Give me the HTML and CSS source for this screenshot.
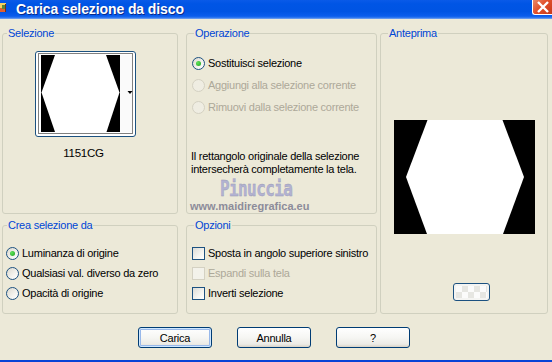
FILE: index.html
```html
<!DOCTYPE html>
<html>
<head>
    <link rel="stylesheet" href="styles.css">
</head>
<body>
    <div class="window">
        <div class="titlebar">
            <svg class="app-icon" width="8" height="14" viewBox="0 0 8 14">
                <rect x="0" y="2" width="6" height="5" fill="#f4d060"/>
                <rect x="0" y="7" width="6" height="4" fill="#e06030"/>
                <rect x="2" y="4" width="3" height="4" fill="#5a8a3a"/>
                <rect x="5" y="3" width="1" height="8" fill="#703018"/>
            </svg>
            <span class="title">Carica selezione da disco</span>
            <div class="close-btn">
                <svg width="20" height="16" viewBox="0 0 20 16">
                    <path d="M5 2 L15 12 M15 2 L5 12" stroke="#fff" stroke-width="2.4"/>
                </svg>
            </div>
        </div>

        <div class="dialog-body">
            <div class="groups">
                <!-- Selezione -->
                <fieldset class="groupbox col-left row-top">
                    <legend class="legend-left">Selezione</legend>
                    <div class="gb-body sel-body">
                        <div class="thumb">
                            <svg width="99" height="84" viewBox="0 0 99 84">
                                <rect x="5" y="3" width="79" height="77" fill="#000"/>
                                <polygon points="19,3 70,3 83.5,40.5 70.5,80 19,80 5.5,40.5" fill="#fff"/>
                                <rect x="84" y="3" width="12" height="77" fill="#fafafa"/>
                                <polygon points="91.5,39 96.5,39 94,42" fill="#000"/>
                                <rect x="2.5" y="1.5" width="94" height="80" fill="none" stroke="#000" stroke-dasharray="1 1"/>
                            </svg>
                        </div>
                        <div class="thumb-label">1151CG</div>
                    </div>
                </fieldset>

                <!-- Operazione -->
                <fieldset class="groupbox col-mid row-top">
                    <legend>Operazione</legend>
                    <div class="gb-body op-body">
                        <div class="opt-row tall"><span class="radio checked"></span>Sostituisci selezione</div>
                        <div class="opt-row tall disabled"><span class="radio"></span>Aggiungi alla selezione corrente</div>
                        <div class="opt-row tall disabled"><span class="radio"></span>Rimuovi dalla selezione corrente</div>
                        <p class="op-note">Il rettangolo originale della selezione<br>intersecherà completamente la tela.</p>
                    </div>
                </fieldset>

                <!-- Anteprima -->
                <fieldset class="groupbox col-right row-both">
                    <legend>Anteprima</legend>
                    <div class="gb-body preview-body">
                        <div class="preview">
                            <svg width="141" height="114" viewBox="0 0 141 114">
                                <rect width="141" height="114" fill="#000"/>
                                <polygon points="33.5,0 108.5,0 130,57 109,114 33,114 12,57" fill="#fff"/>
                            </svg>
                        </div>
                        <div class="swatch-btn"><div class="swatch"></div></div>
                    </div>
                </fieldset>

                <!-- Crea selezione da -->
                <fieldset class="groupbox col-left row-bottom">
                    <legend class="legend-left">Crea selezione da</legend>
                    <div class="gb-body crea-body">
                        <div class="opt-row"><span class="radio checked"></span>Luminanza di origine</div>
                        <div class="opt-row"><span class="radio"></span>Qualsiasi val. diverso da zero</div>
                        <div class="opt-row"><span class="radio"></span>Opacità di origine</div>
                    </div>
                </fieldset>

                <!-- Opzioni -->
                <fieldset class="groupbox col-mid row-bottom">
                    <legend>Opzioni</legend>
                    <div class="gb-body opz-body">
                        <div class="opt-row"><span class="check"></span>Sposta in angolo superiore sinistro</div>
                        <div class="opt-row disabled"><span class="check"></span>Espandi sulla tela</div>
                        <div class="opt-row"><span class="check"></span>Inverti selezione</div>
                    </div>
                </fieldset>
            </div>

            <div class="buttons">
                <button class="btn default">Carica</button>
                <button class="btn">Annulla</button>
                <button class="btn">?</button>
            </div>

            <div class="watermark">
                <div class="wm-name">Pinuccia</div>
                <div class="wm-site">www.maidiregrafica.eu</div>
            </div>
        </div>
    </div>
</body>
</html>
```

FILE: styles.css
```css
/* Finestra di dialogo stile XP */
body {
    margin: 0;
    background-color: #ece9d8;
    font-family: "Liberation Sans", Arial, sans-serif;
    font-size: 11px;
    letter-spacing: -0.25px;
    color: #000;
}

.window {
    width: 552px;
    height: 362px;
    box-sizing: border-box;
    border-bottom: 2px solid #0843d6;
    display: flex;
    flex-direction: column;
    overflow: hidden;
}

.titlebar {
    height: 19px;
    flex-shrink: 0;
    display: flex;
    align-items: flex-start;
    background: linear-gradient(#0a5ae8 0%, #0055e5 20%, #0054e3 60%, #0a5ded 85%, #3a7ff0 95%, #8fb2ec 100%);
}

.app-icon {
    margin-top: 1px;
}

.title {
    margin-left: 8px;
    margin-top: 1px;
    color: #fff;
    font-weight: bold;
    font-size: 14px;
    letter-spacing: -0.1px;
    line-height: 16px;
    text-shadow: 1px 1px 0 #0a2a8a;
}

.close-btn {
    margin-left: auto;
    width: 20px;
    height: 15px;
    box-sizing: border-box;
    border: 1px solid #fff;
    border-top: none;
    border-right: none;
    border-radius: 0 0 0 3px;
    background: linear-gradient(135deg, #ea8a6a 0%, #e1502b 45%, #c8391a 100%);
    line-height: 0;
}

.dialog-body {
    position: relative;
    flex: 1;
    padding: 8px 4px 0 2px;
}

.groups {
    display: grid;
    grid-template-columns: 176px 8px 191px 3px 168px;
    grid-template-rows: 187px 95px;
    row-gap: 5px;
}

.col-left { grid-column: 1; }
.col-mid { grid-column: 3; }
.col-right { grid-column: 5; }
.row-top { grid-row: 1; }
.row-bottom { grid-row: 2; }
.row-both { grid-row: 1 / 3; }

.groupbox {
    margin: 0;
    padding: 0;
    min-width: 0;
    border: 1px solid #d0d0bf;
    border-radius: 3px;
}

.groupbox legend {
    color: #0046d5;
    line-height: 13px;
    padding: 0 1px;
    margin-left: 7px;
}

.groupbox .legend-left {
    margin-left: 4px;
}

/* Selezione */
.sel-body {
    padding: 11px 0 0 32px;
}

.thumb {
    width: 101px;
    height: 86px;
    box-sizing: border-box;
    border: 1px solid #1c5180;
    border-radius: 3px;
    background-color: #fff;
    line-height: 0;
}

.thumb-label {
    width: 97px;
    margin-top: 10px;
    text-align: center;
    line-height: 13px;
    font-size: 11.5px;
}

/* Righe con radio e checkbox */
.opt-row {
    height: 20px;
    display: flex;
    align-items: center;
    white-space: nowrap;
}

.opt-row.tall {
    height: 22px;
}

.opt-row.disabled {
    color: #aca899;
}

.radio {
    width: 13px;
    height: 13px;
    box-sizing: border-box;
    border: 1px solid #1c5180;
    border-radius: 50%;
    background: linear-gradient(135deg, #dcd9cf 0%, #f4f3ee 60%, #fff 100%);
    margin-right: 3px;
    flex-shrink: 0;
    position: relative;
}

.radio.checked::after {
    content: "";
    position: absolute;
    left: 3px;
    top: 3px;
    width: 5px;
    height: 5px;
    border-radius: 50%;
    background: radial-gradient(circle at 35% 35%, #5ee35a, #21a121);
}

.disabled .radio {
    border-color: #d4d1c2;
    background: #efede2;
}

.check {
    width: 13px;
    height: 13px;
    box-sizing: border-box;
    border: 1px solid #1c5180;
    background: linear-gradient(135deg, #dcdcd7 0%, #f4f4f0 60%, #fff 100%);
    margin-right: 3px;
    flex-shrink: 0;
}

.disabled .check {
    border-color: #d4d1c2;
    background: #f3f2ea;
}

/* Operazione */
.op-body {
    padding: 12px 0 0 5px;
}

.op-note {
    margin: 32px 0 0 -1px;
    line-height: 13px;
}

/* Crea selezione / Opzioni */
.crea-body {
    padding: 11px 0 0 3px;
}

.opz-body {
    padding: 11px 0 0 5px;
}

/* Anteprima */
.preview-body {
    padding-top: 80px;
    display: flex;
    flex-direction: column;
    align-items: center;
}

.preview {
    width: 141px;
    height: 114px;
    line-height: 0;
}

.swatch-btn {
    align-self: flex-start;
    margin: 49px 0 0 72px;
    width: 37px;
    height: 18px;
    box-sizing: border-box;
    border: 1px solid #1c5180;
    border-radius: 3px;
    padding: 2px;
    background-color: #f4f4f2;
}

.swatch {
    width: 100%;
    height: 100%;
    background-color: #fff;
    background-image: repeating-conic-gradient(#e6e6e2 0 25%, #fbfbfb 0 50%);
    background-size: 12px 12px;
}

/* Pulsanti */
.buttons {
    display: flex;
    justify-content: center;
    gap: 25px;
    margin: 13px 2px 0 0;
}

.btn {
    width: 74px;
    height: 21px;
    padding: 0;
    border: 1px solid #003c74;
    border-radius: 3px;
    background: linear-gradient(#ffffff 0%, #f6f6f3 50%, #ecebe6 85%, #d8d2c6 100%);
    font-family: "Liberation Sans", Arial, sans-serif;
    font-size: 11px;
    letter-spacing: -0.25px;
    color: #000;
}

.btn.default {
    box-shadow: inset 0 0 0 1px #cee7ff, inset 0 0 0 2px #98b8ea;
}

/* Filigrana */
.watermark {
    position: absolute;
    left: 190px;
    top: 165px;
}

.wm-name {
    margin-left: 30px;
    font-family: "DejaVu Sans Mono", monospace;
    font-weight: bold;
    font-size: 16px;
    letter-spacing: -0.6px;
    line-height: 16px;
    color: #b2b2d2;
    -webkit-text-stroke: 0.3px #9a9ab4;
    transform: scaleY(1.3);
    transform-origin: left bottom;
}

.wm-site {
    font-weight: bold;
    font-size: 11px;
    letter-spacing: 0;
    line-height: 13px;
    color: #8c8c9a;
}
```
